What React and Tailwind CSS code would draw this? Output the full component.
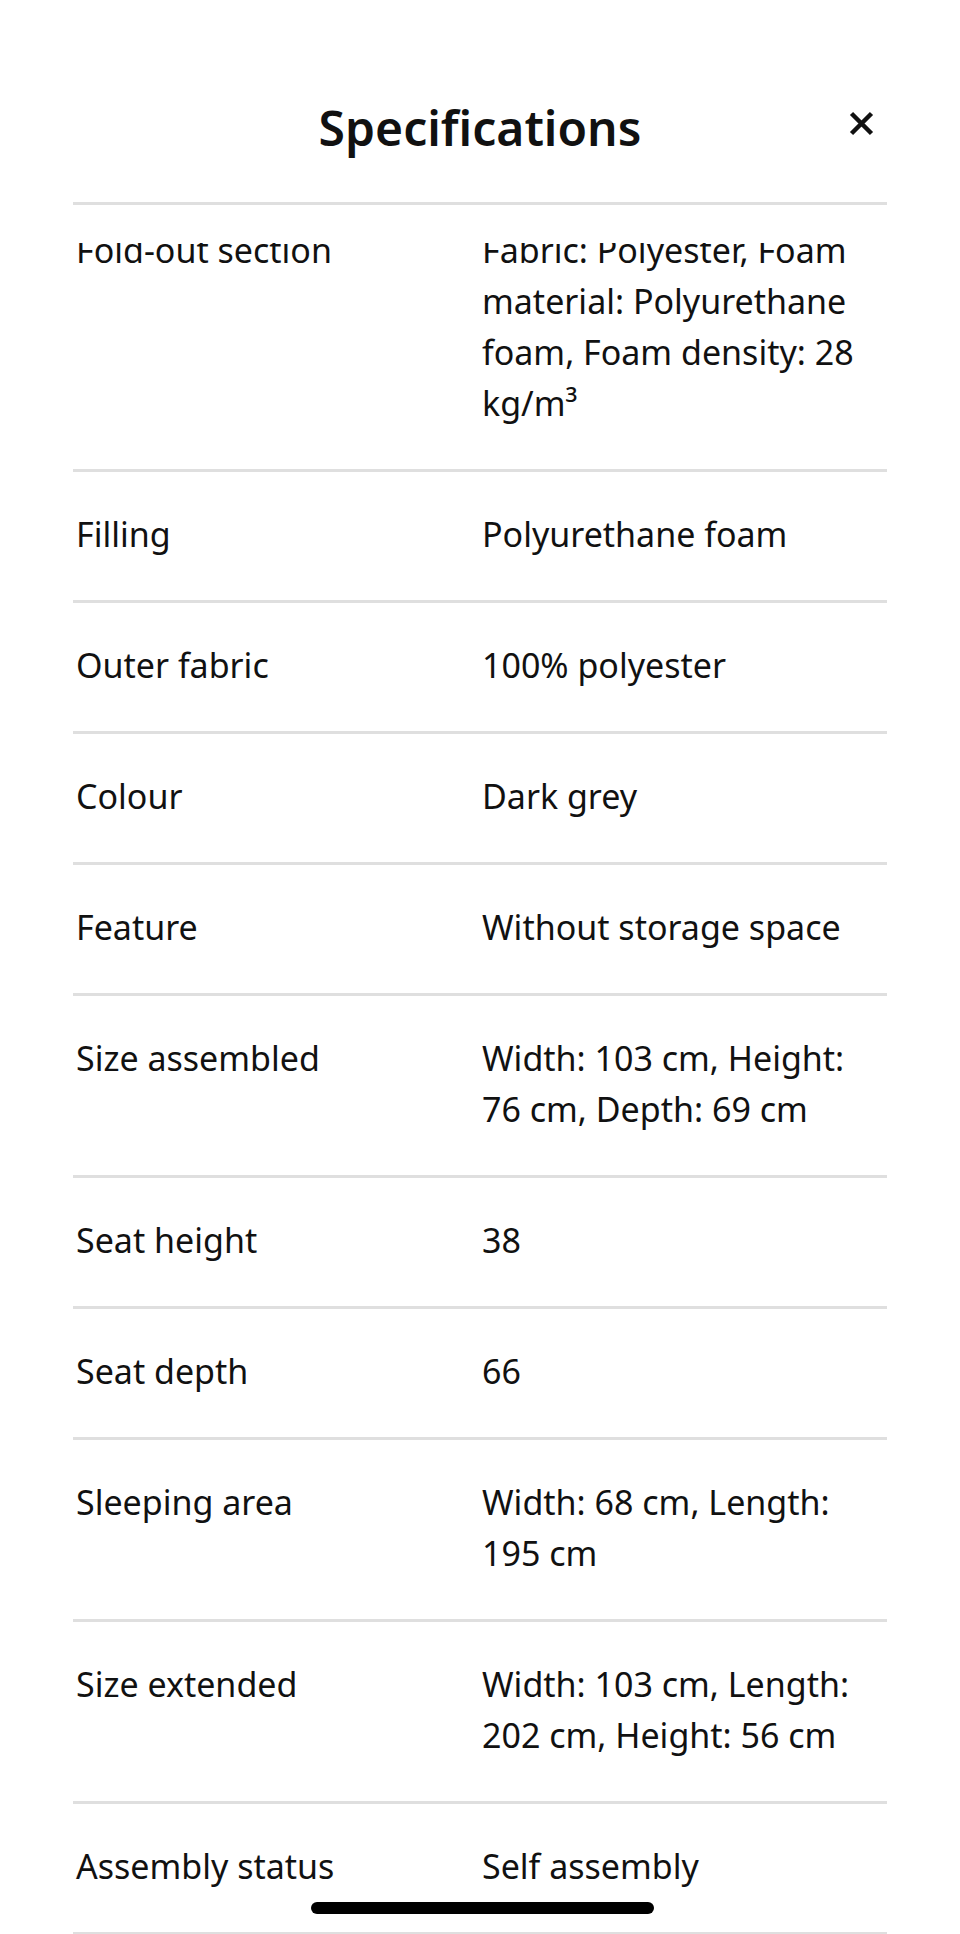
import React from 'react'

const specs = [
  { label: 'Fold-out section', value: 'Fabric: Polyester, Foam material: Polyurethane foam, Foam density: 28 kg/m³' },
  { label: 'Filling', value: 'Polyurethane foam' },
  { label: 'Outer fabric', value: '100% polyester' },
  { label: 'Colour', value: 'Dark grey' },
  { label: 'Feature', value: 'Without storage space' },
  { label: 'Size assembled', value: 'Width: 103 cm, Height: 76 cm, Depth: 69 cm' },
  { label: 'Seat height', value: '38' },
  { label: 'Seat depth', value: '66' },
  { label: 'Sleeping area', value: 'Width: 68 cm, Length: 195 cm' },
  { label: 'Size extended', value: 'Width: 103 cm, Length: 202 cm, Height: 56 cm' },
  { label: 'Assembly status', value: 'Self assembly' },
]

function CloseIcon() {
  return (
    <svg width="25" height="25" viewBox="0 0 25 25" fill="none">
      <path d="M2.5 2.5 L22.5 22.5 M22.5 2.5 L2.5 22.5" stroke="#111111" strokeWidth="4.5" />
    </svg>
  )
}

export default function App() {
  return (
    <div className="relative h-[1934px] overflow-hidden bg-white text-[#111111] font-['Noto_Sans',sans-serif]">
      <div className="relative z-10 h-[243px] bg-white">
        <div className="grid grid-cols-[1fr_auto_1fr] pt-[100px]">
          <div />
          <h1 className="text-[48px] leading-[56px] font-semibold">Specifications</h1>
          <div className="flex justify-end pr-[86px]">
            <button className="mt-[11px] h-[25px] w-[25px]">
              <CloseIcon />
            </button>
          </div>
        </div>
        <div className="mx-[73px] mt-[46px] h-[3px] bg-[#dfdfdf]" />
      </div>

      <div className="-mt-[55px] mx-[73px]">
        {specs.map((row) => (
          <div
            key={row.label}
            className="grid grid-cols-[409px_1fr] border-b-[3px] border-[#dfdfdf] pt-[37px] pb-[40px] text-[34px] leading-[51px]"
          >
            <div className="pl-[3px]">{row.label}</div>
            <div className="pr-[18px]">{row.value}</div>
          </div>
        ))}
      </div>

      {/* home indicator */}
      <div className="absolute bottom-[20px] left-[311px] h-[12px] w-[343px] rounded-full bg-black" />
    </div>
  )
}
